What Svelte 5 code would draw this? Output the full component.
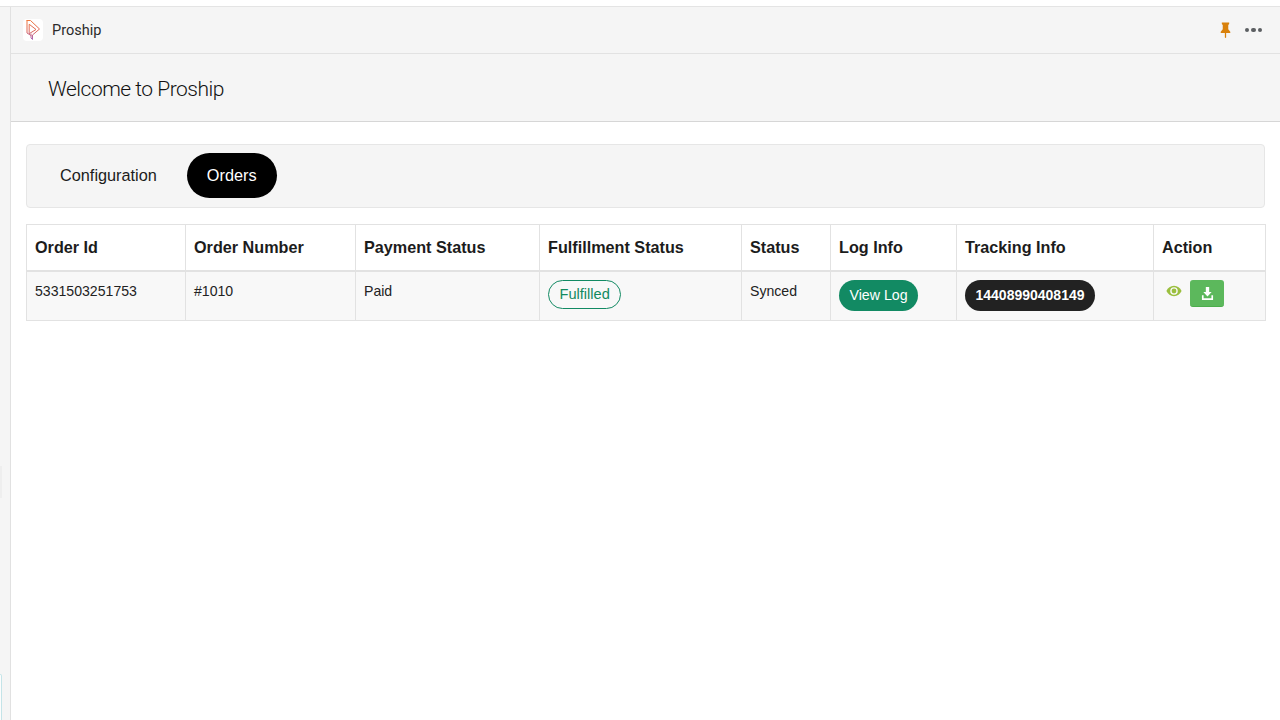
<script>
  const columns = [
    { label: 'Order Id', width: 159 },
    { label: 'Order Number', width: 170 },
    { label: 'Payment Status', width: 184 },
    { label: 'Fulfillment Status', width: 202 },
    { label: 'Status', width: 89 },
    { label: 'Log Info', width: 126 },
    { label: 'Tracking Info', width: 197 },
    { label: 'Action', width: 112 }
  ];
</script>

<div class="page">
  <div class="top-gap"></div>
  <div class="frame">
    <aside class="rail">
      <span class="rail-tab"></span>
      <span class="rail-note"></span>
    </aside>
    <main class="main">
      <header class="appbar">
        <div class="brand">
          <span class="logo">
            <svg viewBox="0 0 20 22" width="20" height="22" fill="none" stroke-width="1" stroke-linejoin="round" stroke-linecap="round" aria-hidden="true">
              <defs>
                <linearGradient id="lg" gradientUnits="userSpaceOnUse" x1="10" y1="1" x2="10" y2="21">
                  <stop offset="0" stop-color="#ee7a3e" />
                  <stop offset="0.55" stop-color="#dd6457" />
                  <stop offset="1" stop-color="#a66cc4" />
                </linearGradient>
              </defs>
              <path d="M4 1.500 H7.500 L16.500 10 L9.500 16 V20.500 L8 19 V15" stroke="url(#lg)" />
              <path d="M4 1.500 V14 L8 16.500" stroke="url(#lg)" />
              <path d="M6.500 5.500 L13 10.500 L6.500 14.500 Z" stroke="url(#lg)" />
            </svg>
          </span>
          <span class="brand-name">Proship</span>
        </div>
        <div class="bar-actions">
          <svg class="pin" viewBox="0 0 12 16" width="11" height="16" preserveAspectRatio="none" aria-hidden="true">
            <path fill="#d9810b" d="M2 .5h8v1.600L9 3v4.200l2.200 2.600V11H6.700v4.500L6 16l-.7-.5V11H.8V9.800L3 7.200V3L2 2.100z" />
          </svg>
          <span class="dots"><i></i><i></i><i></i></span>
        </div>
      </header>

      <section class="welcome"><h1>Welcome to Proship</h1></section>

      <div class="content">
        <nav class="tabs">
          <span class="tab">Configuration</span>
          <span class="tab active">Orders</span>
        </nav>

        <table>
          <colgroup>
            {#each columns as c}
              <col style="width: {c.width}px" />
            {/each}
          </colgroup>
          <thead>
            <tr>
              {#each columns as c}
                <th>{c.label}</th>
              {/each}
            </tr>
          </thead>
          <tbody>
            <tr>
              <td>5331503251753</td>
              <td>#1010</td>
              <td>Paid</td>
              <td class="pill-cell"><span class="fulfilled">Fulfilled</span></td>
              <td>Synced</td>
              <td class="pill-cell"><span class="viewlog">View Log</span></td>
              <td class="pill-cell"><span class="tracking">14408990408149</span></td>
              <td class="action-cell">
                <div class="actions">
                  <svg class="eye" viewBox="0 0 16 12" width="16" height="12" aria-hidden="true">
                    <path fill="#9bbf3f" fill-rule="evenodd" d="M8 .8C4.600.8 1.800 2.900.4 6c1.400 3.100 4.200 5.200 7.600 5.200s6.200-2.100 7.600-5.200C14.200 2.900 11.400.8 8 .8zM8 2.200a3.800 3.800 0 1 1 0 7.600 3.800 3.800 0 0 1 0-7.600z" />
                    <circle cx="8" cy="6" r="2.400" fill="#9bbf3f" />
                  </svg>
                  <span class="download">
                    <svg viewBox="0 0 14 14" width="13" height="13" aria-hidden="true">
                      <path fill="#fff" d="M5.200 0h3.600v5.500h2.700L7 10.300 2.500 5.500h2.700z" />
                      <path fill="#fff" d="M1 9h1.800v3h8.400V9H13v5H1z" />
                    </svg>
                  </span>
                </div>
              </td>
            </tr>
          </tbody>
        </table>
      </div>
    </main>
  </div>
</div>

<style>
  :global(body) {
    margin: 0;
    background: #fff;
  }
  .page {
    width: 1280px;
    height: 720px;
    overflow: hidden;
    display: flex;
    flex-direction: column;
    font-family: "Liberation Sans", Arial, sans-serif;
    color: #1a1a1a;
  }
  .top-gap {
    height: 6px;
    flex: none;
    background: #fff;
    border-bottom: 1px solid #e4e4e4;
  }
  .frame {
    flex: 1;
    display: flex;
    min-height: 0;
  }
  .rail {
    position: relative;
    width: 10px;
    flex: none;
    background: #f5f5f5;
    border-right: 1px solid #e1e1e1;
  }
  .rail-tab {
    position: absolute;
    left: 0;
    top: 459px;
    width: 2px;
    height: 32px;
    background: #eeeeee;
  }
  .rail-note {
    position: absolute;
    left: 0;
    top: 667px;
    width: 1px;
    height: 60px;
    background: #fdfdfd;
    border: 1px solid #c4e4e8;
    border-left: 0;
    border-radius: 0 2px 0 0;
  }
  .main {
    flex: 1;
    min-width: 0;
  }
  .appbar {
    height: 46px;
    display: flex;
    align-items: center;
    justify-content: space-between;
    background: #f5f5f5;
    border-bottom: 1px solid #e2e2e2;
    padding: 0 18px 0 12px;
  }
  .brand {
    display: flex;
    align-items: center;
    gap: 9px;
  }
  .logo {
    width: 20px;
    height: 22px;
    background: #fff;
    border-radius: 4px;
    display: flex;
    align-items: center;
    justify-content: center;
  }
  .brand-name {
    font-family: Roboto, "Liberation Sans", sans-serif;
    font-size: 14.5px;
    color: #2b2b2b;
  }
  .bar-actions {
    display: flex;
    align-items: center;
    gap: 13.5px;
  }
  .pin {
    display: block;
  }
  .dots {
    display: flex;
    gap: 2px;
  }
  .dots i {
    width: 4.500px;
    height: 4.500px;
    border-radius: 50%;
    background: #5c5f62;
  }
  .welcome {
    height: 65px;
    padding-top: 2px;
    box-sizing: content-box;
    background: #f5f5f5;
    border-bottom: 1px solid #d6d6d6;
    display: flex;
    align-items: center;
    padding-left: 37px;
  }
  .welcome h1 {
    margin: 0;
    font-family: Roboto, "Liberation Sans", sans-serif;
    font-weight: 300;
    font-size: 21px;
    letter-spacing: -0.5px;
    color: #111;
  }
  .content {
    padding: 22px 15px 0;
  }
  .tabs {
    box-sizing: border-box;
    height: 64px;
    display: flex;
    align-items: center;
    gap: 10px;
    padding: 0 13px;
    background: #f5f5f5;
    border: 1px solid #e6e6e6;
    border-radius: 4px;
  }
  .tab {
    display: flex;
    align-items: center;
    height: 45px;
    padding: 0 20px;
    border-radius: 22.500px;
    font-size: 16.3px;
    color: #1c1c1c;
    margin-top: -1px;
  }
  .tab.active {
    background: #000;
    color: #fff;
  }
  table {
    box-sizing: border-box;
    width: 1238px;
    margin-top: 16px;
    table-layout: fixed;
    border-collapse: collapse;
  }
  th,
  td {
    border: 1px solid #e2e2e2;
    padding: 0 8px;
    text-align: left;
    overflow: hidden;
    white-space: nowrap;
  }
  th {
    height: 45px;
    font-size: 16.2px;
    font-weight: 700;
    color: #1c1c1c;
    background: #fff;
    border-bottom-width: 2px;
  }
  td {
    height: 49px;
    padding-top: 11px;
    vertical-align: top;
    font-size: 14.1px;
    line-height: 16px;
    color: #222;
    background: #f8f8f8;
    box-sizing: border-box;
  }
  td.pill-cell {
    padding-top: 8px;
  }
  td.action-cell {
    padding-top: 8px;
  }
  .fulfilled {
    display: inline-block;
    box-sizing: border-box;
    height: 29px;
    line-height: 27px;
    padding: 0 10.500px;
    border: 1px solid #128a63;
    border-radius: 15px;
    color: #128a5f;
    font-size: 14.6px;
  }
  .viewlog {
    display: inline-block;
    height: 31px;
    line-height: 31px;
    padding: 0 10.500px;
    border-radius: 16px;
    background: #128a63;
    color: #fff;
    font-size: 14.2px;
  }
  .tracking {
    display: inline-block;
    height: 31px;
    line-height: 31px;
    padding: 0 10.500px;
    border-radius: 16px;
    background: #222;
    color: #fff;
    font-size: 14px;
    font-weight: 700;
  }
  .actions {
    display: flex;
    align-items: flex-start;
    gap: 8px;
    padding-left: 4px;
  }
  .eye {
    margin-top: 5px;
    flex: none;
  }
  .download {
    width: 34px;
    height: 27px;
    box-sizing: border-box;
    display: flex;
    align-items: center;
    justify-content: center;
    background: #5cb85c;
    border-bottom: 1px solid #4cae4c;
    border-radius: 3px;
  }
</style>
